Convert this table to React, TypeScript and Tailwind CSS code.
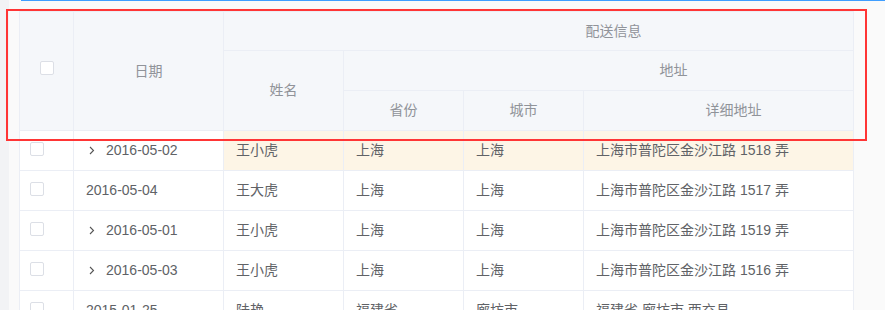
import React from "react";

type Row = {
  date: string;
  name: string;
  province: string;
  city: string;
  address: string;
  hasChildren?: boolean;
  highlight?: boolean;
};

const rows: Row[] = [
  { date: "2016-05-02", name: "王小虎", province: "上海", city: "上海", address: "上海市普陀区金沙江路 1518 弄", hasChildren: true, highlight: true },
  { date: "2016-05-04", name: "王大虎", province: "上海", city: "上海", address: "上海市普陀区金沙江路 1517 弄" },
  { date: "2016-05-01", name: "王小虎", province: "上海", city: "上海", address: "上海市普陀区金沙江路 1519 弄", hasChildren: true },
  { date: "2016-05-03", name: "王小虎", province: "上海", city: "上海", address: "上海市普陀区金沙江路 1516 弄", hasChildren: true },
  { date: "2015-01-25", name: "陆艳", province: "福建省", city: "廊坊市", address: "福建省 廊坊市 西充县" },
];

// last column is scrolled out of view, only its width counts
const cols = "grid-cols-[54px_150px_120px_120px_120px_300px_120px]";

function Checkbox() {
  return <span className="block h-[14px] w-[14px] rounded-[2px] border border-[#dcdfe6] bg-white" />;
}

function Chevron() {
  return (
    <svg width="6" height="9" viewBox="0 0 6 9" className="ml-[3px]">
      <polyline points="1,1 4.5,4.5 1,8" fill="none" stroke="#555" strokeWidth="1.1" />
    </svg>
  );
}

export default function App() {
  const th = "flex items-center justify-center border-r border-b border-[#ebeef5] text-[#909399]";
  const td = "flex items-center border-r border-b border-[#ebeef5] pl-[12px] whitespace-nowrap";

  return (
    <div
      className="relative flex h-[310px] w-[885px] overflow-hidden bg-[#fafafa] text-[14px]"
      style={{ fontFamily: '"Liberation Sans", "Noto Sans CJK SC", sans-serif' }}
    >
      <div className="w-[9px] shrink-0 bg-[#f2f3f5]" />
      <div className="flex-1 pl-[10px]">
        <div className="ml-[2px] h-px bg-[#409eff]" />
        <div className="mt-[10px] w-[835px] overflow-hidden border-x border-t border-[#ebeef5] bg-white">
          {/* header */}
          <div className={`grid w-[984px] ${cols} grid-rows-[39px_40px_40px] bg-[#f5f7fa]`}>
            <div className={`${th} col-start-1 row-span-3 row-start-1`}>
              <span className="mb-[6px]">
                <Checkbox />
              </span>
            </div>
            <div className={`${th} col-start-2 row-span-3 row-start-1`}>日期</div>
            <div className={`${th} col-span-5 col-start-3 row-start-1`}>配送信息</div>
            <div className={`${th} col-start-3 row-span-2 row-start-2`}>姓名</div>
            <div className={`${th} col-span-4 col-start-4 row-start-2`}>地址</div>
            <div className={`${th} col-start-4 row-start-3`}>省份</div>
            <div className={`${th} col-start-5 row-start-3`}>城市</div>
            <div className={`${th} col-start-6 row-start-3`}>详细地址</div>
            <div className={`${th} col-start-7 row-start-3`} />
          </div>

          {/* body */}
          {rows.map((r) => {
            const bg = r.highlight ? "bg-[#fdf5e6]" : "bg-white";
            return (
              <div key={r.address} className={`grid h-[40px] w-[984px] ${cols} text-[#606266]`}>
                <div className="border-r border-b border-[#ebeef5] bg-white pl-[10px] pt-[11px]">
                  <Checkbox />
                </div>
                <div className={`${td} bg-white`}>
                  {r.hasChildren && (
                    <span className="flex w-[20px] items-center">
                      <Chevron />
                    </span>
                  )}
                  {r.date}
                </div>
                <div className={`${td} ${bg}`}>{r.name}</div>
                <div className={`${td} ${bg}`}>{r.province}</div>
                <div className={`${td} ${bg}`}>{r.city}</div>
                <div className={`${td} ${bg}`}>{r.address}</div>
                <div className={`${td} ${bg}`} />
              </div>
            );
          })}
        </div>
      </div>

      {/* annotation box */}
      <div className="pointer-events-none absolute left-[6px] top-[9px] h-[132px] w-[861px] border-2 border-[#ff3535]" />
    </div>
  );
}
